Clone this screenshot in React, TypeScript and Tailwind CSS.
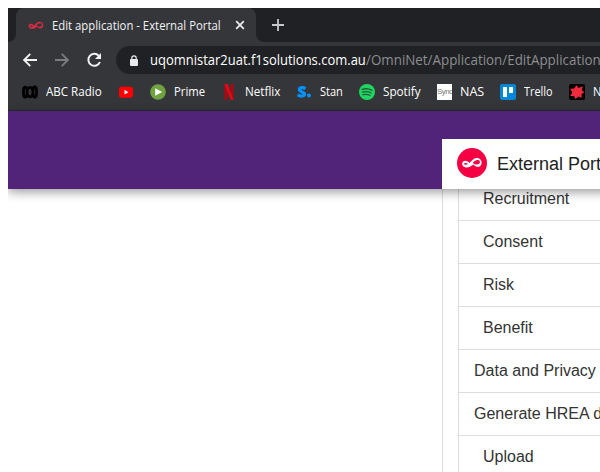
import React from "react";

const ui = "font-['Open_Sans','Noto_Sans',sans-serif]";

// Text squeezed or stretched to a fixed advance width.
function FitText({ text, width, size, className = "", weight = 400 }: { text: string; width: number; size: number; className?: string; weight?: number }) {
  const ref = React.useRef<HTMLSpanElement>(null);
  const [scale, setScale] = React.useState(1);
  React.useLayoutEffect(() => {
    if (ref.current) setScale(width / ref.current.offsetWidth);
  }, [width, text]);
  return (
    <span className={`block shrink-0 whitespace-nowrap ${ui} ${className}`} style={{ width }}>
      <span ref={ref} className="inline-block origin-left" style={{ transform: `scaleX(${scale})`, fontSize: size, fontWeight: weight }}>
        {text}
      </span>
    </span>
  );
}

// Ribbon knot: small open loop on the left, large loop on the right.
function Loop({ className, fill }: { className: string; fill: string }) {
  return (
    <svg viewBox="0 0 40 24" className={className} fill={fill} fillRule="evenodd">
      <path d="M15 12C12 8 5 6 2 9C-1 12 0 18 5 20C11 23 18 19 23 15C27 20 35 22 38 16C42 8 36 1 28 2C22 3 19 8 15 12ZM12 13.5C10 16 6 16.5 4.5 14.5C3.5 12.5 7 10.5 12 13.5ZM21.500 12C25 7 31 4.500 34.500 7C37 9 36 13 32 14.500C28 16 24.500 14.500 21.500 12Z" />
    </svg>
  );
}

const Abc = () => (
  <svg viewBox="0 0 16 16" className="size-4" fill="none" stroke="#000" strokeWidth="2.7">
    <path d="M5 6.5C5 1.8 1.5 1.8 1.5 6.5v3c0 5 3.5 5 3.5 0C5 6 6 3.4 8 3.400s3 2.600 3 6.100c0 5 3.5 5 3.5 0v-3c0-5-3.5-5-3.5 0C11 10 10 12.800 8 12.800S5 10 5 6.5Z" />
  </svg>
);
const YouTube = () => (
  <svg viewBox="0 0 16 16" className="size-4">
    <rect x="1" y="2.700" width="14" height="11" rx="2.2" fill="#f00" />
    <path d="M6.5 5.8v4.8l4-2.4Z" fill="#fff" />
  </svg>
);
const Prime = () => (
  <svg viewBox="0 0 16 16" className="size-4">
    <circle cx="8" cy="8" r="7.8" fill="#70a340" />
    <path d="M5.2 4.2v7.6l7-3.8Z" fill="#fff" />
  </svg>
);
const Netflix = () => (
  <svg viewBox="0 0 16 16" className="size-4">
    <path d="M3.5 0h3v15.6L3.5 16ZM9.5 0h3v16l-3-.4Z" fill="#b1060f" />
    <path d="M3.5 0h3l6 16-3-.4Z" fill="#e50914" />
  </svg>
);
const Stan = () => (
  <svg viewBox="0 0 16 16" className="size-4">
    <path d="M9.500 4.700C7 3 3.400 3.400 3.400 5.600 3.400 8.400 8.500 7.400 8.500 10c0 2.500-4.100 2.600-6.900.800" fill="none" stroke="#0093ff" strokeWidth="3.2" />
    <circle cx="13" cy="11.600" r="2" fill="#0093ff" />
  </svg>
);
const Spotify = () => (
  <svg viewBox="0 0 16 16" className="size-4">
    <circle cx="8" cy="8" r="8" fill="#1ed760" />
    <path d="M3 5.4c3.5-1 7-.7 10 .9M3.5 8.1c3-.8 6-.5 8.5.9M4 10.7c2.5-.6 4.8-.4 7 .8" fill="none" stroke="#285b3b" strokeWidth="1.35" strokeLinecap="round" />
  </svg>
);
const Synology = () => (
  <span className="flex h-4 w-[15px] items-center overflow-hidden bg-white font-['Liberation_Sans',sans-serif] text-[8px] leading-none tracking-[-0.6px] text-[#777]">Syno</span>
);
const Trello = () => (
  <svg viewBox="0 0 16 16" className="size-4">
    <rect width="16" height="16" rx="2" fill="#0087d8" />
    <rect x="3" y="3" width="4" height="10" rx="0.6" fill="#fff" />
    <rect x="9" y="3" width="4" height="6" rx="0.6" fill="#fff" />
  </svg>
);
const News = () => (
  <svg viewBox="0 0 16 16" className="size-4">
    <rect width="16" height="16" rx="2" fill="#050000" />
    <path d="M7.500 1.200 9.500 4 13.800 2.300 12.800 6 15.300 8.600 12.500 10 12.800 13.800 9.500 12.500 6.400 15 5 12 1.200 12 3.200 8.600 1.200 4.800 5.200 4.600Z" fill="#f12b3b" />
  </svg>
);

const bookmarks: { label?: string; width?: number; Icon: () => React.ReactElement }[] = [
  { label: "ABC Radio", width: 56, Icon: Abc },
  { Icon: YouTube },
  { label: "Prime", width: 31, Icon: Prime },
  { label: "Netflix", width: 35, Icon: Netflix },
  { label: "Stan", width: 23, Icon: Stan },
  { label: "Spotify", width: 38, Icon: Spotify },
  { label: "NAS", width: 24, Icon: Synology },
  { label: "Trello", width: 29, Icon: Trello },
  { label: "News", width: 29, Icon: News },
];

const rows = [
  { label: "Recruitment", sub: true },
  { label: "Consent", sub: true },
  { label: "Risk", sub: true },
  { label: "Benefit", sub: true },
  { label: "Data and Privacy", sub: false },
  { label: "Generate HREA document", sub: false },
  { label: "Upload", sub: true },
];

export default function App() {
  return (
    <div className="h-[472px] w-[600px] overflow-hidden bg-white pt-2 pl-2">
      <div className="h-[464px] overflow-hidden">
        <div className="flex h-[34px] items-end bg-[#202124]">
          <svg viewBox="0 0 8 8" className="size-2 shrink-0"><path d="M8 0v8H0a8 8 0 0 0 8-8Z" fill="#35363a" /></svg>
          <div className="flex h-[34px] w-60 shrink-0 items-center rounded-t-lg bg-[#35363a] pl-3">
            <Loop className="h-[9px] w-4 shrink-0" fill="#d52c43" />
            <FitText text="Edit application - External Portal" width={169} size={12} className="mb-px ml-2 leading-4 text-[#f1f3f4]" />
            <svg viewBox="0 0 10 10" className="ml-3.5 size-2.5" stroke="#e8eaed" strokeWidth="1.8"><path d="m1.2 1.2 7.6 7.6m0-7.6L1.2 8.8" /></svg>
          </div>
          <svg viewBox="0 0 8 8" className="size-2 shrink-0"><path d="M0 0v8h8a8 8 0 0 1-8-8Z" fill="#35363a" /></svg>
          <svg viewBox="0 0 12 12" className="mb-[11px] ml-2 size-3" stroke="#c6c8cb" strokeWidth="1.8"><path d="M6 0v12M0 6h12" /></svg>
        </div>

        <div className="flex h-9 items-center bg-[#35363a] pl-[15px]">
          <svg viewBox="0 0 14 14" className="size-3.5 shrink-0" fill="none" stroke="#f1f3f4" strokeWidth="1.9"><path d="M14 7H1.5M7.3 .8 1.1 7l6.2 6.2" /></svg>
          <svg viewBox="0 0 14 14" className="ml-[18px] size-3.5 shrink-0" fill="none" stroke="#7b7c7f" strokeWidth="1.8"><path d="M0 7h12.5M6.7.8 12.9 7l-6.2 6.2" /></svg>
          <svg viewBox="0 0 16 16" className="ml-[17px] size-4 shrink-0"><path d="M12.7 3.7A6 6 0 1 0 13.9 10" fill="none" stroke="#f1f3f4" strokeWidth="2" /><path d="M15 1v6H9Z" fill="#f1f3f4" /></svg>
          <div className="ml-3.5 flex h-7 min-w-0 flex-1 items-center overflow-hidden rounded-l-full bg-[#202124] pl-3.5">
            <svg viewBox="0 0 8 11" className="h-[11px] w-2 shrink-0"><rect y="4" width="8" height="7" rx="1" fill="#e8eaed" /><path d="M1.8 4.5V3a2.2 2.2 0 0 1 4.4 0v1.5" fill="none" stroke="#e8eaed" strokeWidth="1.2" /></svg>
            <FitText text="uqomnistar2uat.f1solutions.com.au" width={216} size={14} className="mb-0.5 ml-3 leading-5 text-white" />
            <FitText text="/OmniNet/Application/EditApplication" width={235} size={14} className="mb-0.5 leading-5 text-[#8c8e91]" />
          </div>
        </div>

        <div className="flex h-[33px] gap-4 overflow-hidden border-b border-[#29292c] bg-[#35363a] pt-1.5 pl-3.5">
          {bookmarks.map(({ label, width, Icon }, i) => (
            <div key={i} className="flex h-4 shrink-0 items-center gap-2">
              <Icon />
              {label && <FitText text={label} width={width!} size={12} className="mb-0.5 leading-4 text-white" />}
            </div>
          ))}
        </div>

        <header className="relative z-10 flex h-[78px] w-[640px] items-end bg-[#51247a] pl-[434px] font-['Liberation_Sans',Arial,sans-serif] shadow-[0_3px_10px_rgba(0,0,0,0.4)]">
          <div className="flex h-[50px] flex-1 items-center bg-white pl-[15px]">
            <span className="mb-0.5 flex size-[30px] shrink-0 items-center justify-center rounded-full bg-[#f50042]">
              <Loop className="h-3 w-5" fill="#fff" />
            </span>
            <span className="ml-2.5 text-lg leading-6 whitespace-nowrap text-[#212121]">External Portal</span>
          </div>
        </header>

        <main className="ml-[434px] h-[283px] overflow-hidden border-l border-[#ddd] pl-[15px] font-['Liberation_Sans',Arial,sans-serif] text-base text-[#333]">
          <ul className="-mt-[11px] border-l border-[#ddd]">
            {rows.map(({ label, sub }) => (
              <li key={label} className={`flex h-[43px] items-center border-b border-[#ddd] whitespace-nowrap ${sub ? "pl-6" : "pl-[15px]"}`}>{label}</li>
            ))}
          </ul>
        </main>
      </div>
    </div>
  );
}
